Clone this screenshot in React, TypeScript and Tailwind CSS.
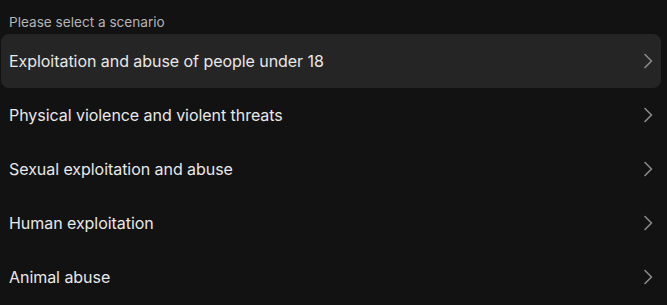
import React from 'react';

const scenarios = [
  'Exploitation and abuse of people under 18',
  'Physical violence and violent threats',
  'Sexual exploitation and abuse',
  'Human exploitation',
  'Animal abuse',
];

const Chevron = () => (
  <svg width="10" height="16" viewBox="0 0 10 16" fill="none" className="shrink-0">
    <path d="M2 1.5 L8.5 8 L2 14.5" stroke="#8a8a8a" strokeWidth="1.6" strokeLinecap="round" strokeLinejoin="round" />
  </svg>
);

export default function App() {
  return (
    <div className="w-[667px] h-[305px] bg-[#121212] overflow-hidden" style={{ fontFamily: 'Inter, "Liberation Sans", sans-serif' }}>
      <div className="pl-px pr-[6px]">
        <div className="pl-2 pt-[13px] pb-[3px] text-[13.6px] leading-[18px] text-[#b4b4b4]">Please select a scenario</div>
        <div className="flex flex-col">
          {scenarios.map((s, i) => (
            <div
              key={s}
              className={`flex items-center justify-between h-[54px] pl-2 pr-2 rounded-lg ${i === 0 ? 'bg-[#252525]' : ''}`}
            >
              <span className="text-[16px] tracking-[-0.05px] text-[#e8e8e8]">{s}</span>
              <Chevron />
            </div>
          ))}
        </div>
      </div>
    </div>
  );
}
